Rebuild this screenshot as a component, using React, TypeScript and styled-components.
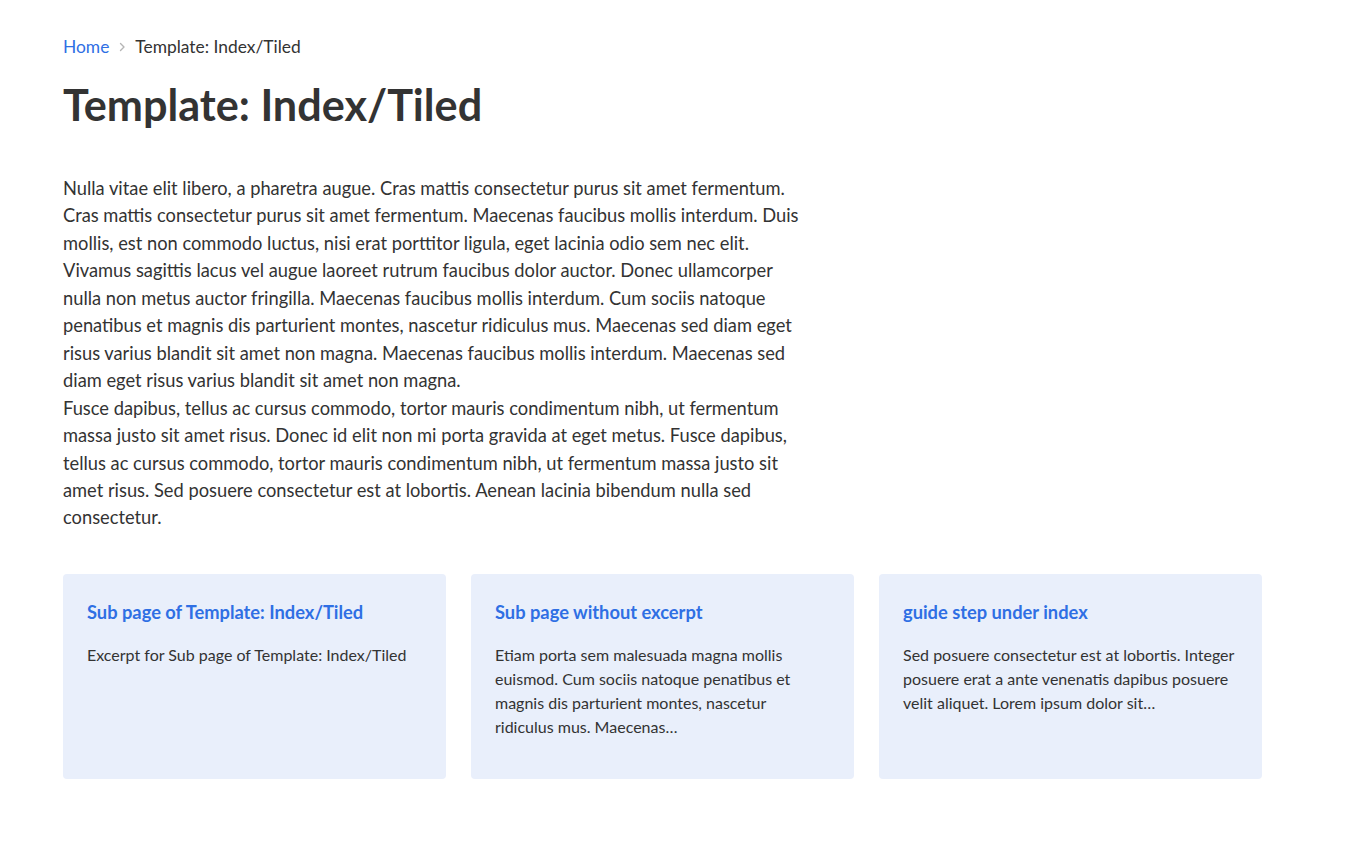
import React from "react";
import styled, { createGlobalStyle } from "styled-components";

const Global = createGlobalStyle`
  html, body { margin: 0; padding: 0; background: #fff; }
  body { font-family: Lato, "Open Sans", sans-serif; color: #333; -webkit-font-smoothing: antialiased; }
  * { box-sizing: border-box; }
`;

const Page = styled.main`
  padding: 35px 63px 60px;
  width: 1326px;
`;

const Crumbs = styled.nav`
  display: flex;
  align-items: center;
  gap: 7px;
  font-size: 17.4px;
  line-height: 24px;
  color: #333;
`;

const CrumbLink = styled.a`
  color: #2f6fe4;
  text-decoration: none;
`;

const Chevron = styled.svg`
  width: 12px;
  height: 12px;
  color: #b5b5b5;
`;

const Title = styled.h1`
  margin: 18px 0 0;
  font-size: 43.2px;
  line-height: 54px;
  font-weight: 700;
  color: #333;
`;

const Body = styled.div`
  margin-top: 44px;
  max-width: 745px;
  font-size: 18.3px;
  line-height: 27.45px;
  color: #333;
  p { margin: 0; }
`;

const Grid = styled.div`
  margin-top: 42px;
  display: grid;
  grid-template-columns: repeat(3, 383px);
  column-gap: 25px;
`;

const Card = styled.a`
  display: block;
  height: 205px;
  background: #e9effb;
  border-radius: 4px;
  padding: 25px 27px 24px 24px;
  text-decoration: none;
`;

const CardTitle = styled.h3`
  margin: 0;
  font-size: 18.3px;
  line-height: 26px;
  font-weight: 700;
  color: #2f6fe4;
`;

const CardText = styled.p`
  margin: 18px 0 0;
  font-size: 16px;
  line-height: 24px;
  color: #333;
`;

const cards = [
  {
    title: "Sub page of Template: Index/Tiled",
    text: "Excerpt for Sub page of Template: Index/Tiled",
  },
  {
    title: "Sub page without excerpt",
    text: "Etiam porta sem malesuada magna mollis euismod. Cum sociis natoque penatibus et magnis dis parturient montes, nascetur ridiculus mus. Maecenas…",
  },
  {
    title: "guide step under index",
    text: "Sed posuere consectetur est at lobortis. Integer posuere erat a ante venenatis dapibus posuere velit aliquet. Lorem ipsum dolor sit…",
  },
];

export default function App() {
  return (
    <>
      <Global />
      <Page>
        <Crumbs>
          <CrumbLink href="#">Home</CrumbLink>
          <Chevron viewBox="0 0 12 12" fill="none">
            <path d="M4.5 2.5L8 6L4.5 9.5" stroke="currentColor" strokeWidth="1.4" strokeLinecap="round" strokeLinejoin="round" />
          </Chevron>
          <span>Template: Index/Tiled</span>
        </Crumbs>
        <Title>Template: Index/Tiled</Title>
        <Body>
          <p>
            Nulla vitae elit libero, a pharetra augue. Cras mattis consectetur purus sit amet fermentum. Cras mattis consectetur purus sit amet fermentum. Maecenas faucibus mollis interdum. Duis mollis, est non commodo luctus, nisi erat porttitor ligula, eget lacinia odio sem nec elit. Vivamus sagittis lacus vel augue laoreet rutrum faucibus dolor auctor. Donec ullamcorper nulla non metus auctor fringilla. Maecenas faucibus mollis interdum. Cum sociis natoque penatibus et magnis dis parturient montes, nascetur ridiculus mus. Maecenas sed diam eget risus varius blandit sit amet non magna. Maecenas faucibus mollis interdum. Maecenas sed diam eget risus varius blandit sit amet non magna.
          </p>
          <p>
            Fusce dapibus, tellus ac cursus commodo, tortor mauris condimentum nibh, ut fermentum massa justo sit amet risus. Donec id elit non mi porta gravida at eget metus. Fusce dapibus, tellus ac cursus commodo, tortor mauris condimentum nibh, ut fermentum massa justo sit amet risus. Sed posuere consectetur est at lobortis. Aenean lacinia bibendum nulla sed consectetur.
          </p>
        </Body>
        <Grid>
          {cards.map((c) => (
            <Card key={c.title} href="#">
              <CardTitle>{c.title}</CardTitle>
              <CardText>{c.text}</CardText>
            </Card>
          ))}
        </Grid>
      </Page>
    </>
  );
}
